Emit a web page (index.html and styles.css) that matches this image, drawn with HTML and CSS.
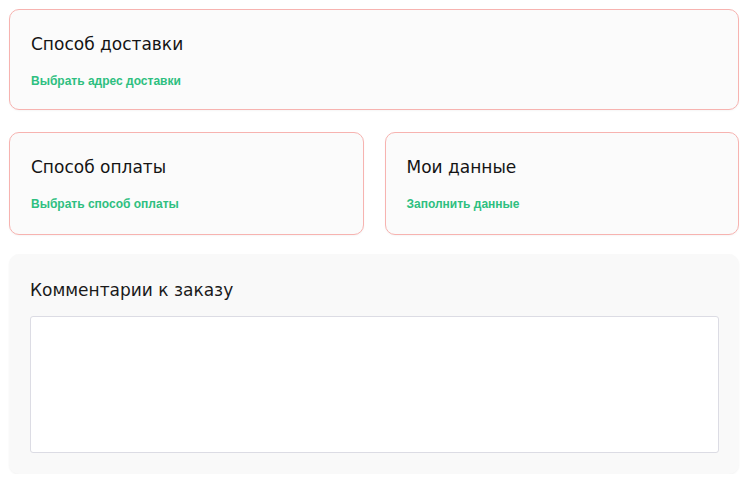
FILE: index.html
```html
<!DOCTYPE html>
<html lang="ru">
<head>
<meta charset="utf-8">
<link rel="stylesheet" href="styles.css">
</head>
<body>
<main class="page">
  <section class="card card-wide">
    <h2 class="card-title">Способ доставки</h2>
    <a class="card-link" href="#">Выбрать адрес доставки</a>
  </section>
  <div class="row">
    <section class="card">
      <h2 class="card-title">Способ оплаты</h2>
      <a class="card-link" href="#">Выбрать способ оплаты</a>
    </section>
    <section class="card">
      <h2 class="card-title">Мои данные</h2>
      <a class="card-link" href="#">Заполнить данные</a>
    </section>
  </div>
  <section class="comment">
    <h2 class="comment-title">Комментарии к заказу</h2>
    <textarea class="comment-input"></textarea>
  </section>
</main>
</body>
</html>
```
FILE: styles.css
```css
* { box-sizing: border-box; }
html, body { margin: 0; padding: 0; background: #fff; }
body { font-family: "DejaVu Sans", "Noto Sans", sans-serif; color: #111; }
.page {
  width: 730px;
  margin: 9px 0 0 9px;
  display: flex;
  flex-direction: column;
  gap: 22px;
}
.row {
  display: grid;
  grid-template-columns: 1fr 1fr;
  gap: 21px;
}
.card {
  height: 103px;
  border: 1px solid #f7b3b0;
  border-radius: 10px;
  background: #fbfbfb;
  padding: 22px 21px 0;
  display: flex;
  flex-direction: column;
  gap: 17px;
  box-shadow: 0 1px 2px rgba(0,0,0,0.04);
}
.card-wide { height: 101px; }
.card-title {
  margin: 0;
  font-size: 17px;
  font-weight: 400;
  line-height: 24px;
  color: #141414;
}
.card-link {
  display: block;
  font-family: "Liberation Sans", "DejaVu Sans", sans-serif;
  font-size: 12px;
  font-weight: 700;
  line-height: 16px;
  color: #2ebf80;
  text-decoration: none;
}
.comment {
  height: 220px;
  margin-top: -3px;
  background: #f9f9f9;
  border-radius: 10px;
  padding: 23px 20px 0 21px;
  display: flex;
  flex-direction: column;
  gap: 13px;
  box-shadow: 0 1px 2px rgba(0,0,0,0.05);
}
.comment-title {
  margin: 0;
  font-size: 17px;
  font-weight: 400;
  line-height: 26px;
  color: #1a1a1a;
}
.comment-input {
  display: block;
  width: 689px;
  height: 137px;
  flex: none;
  border: 1px solid #dcdce4;
  border-radius: 3px;
  background: #fff;
  resize: none;
  font-family: inherit;
}
```
